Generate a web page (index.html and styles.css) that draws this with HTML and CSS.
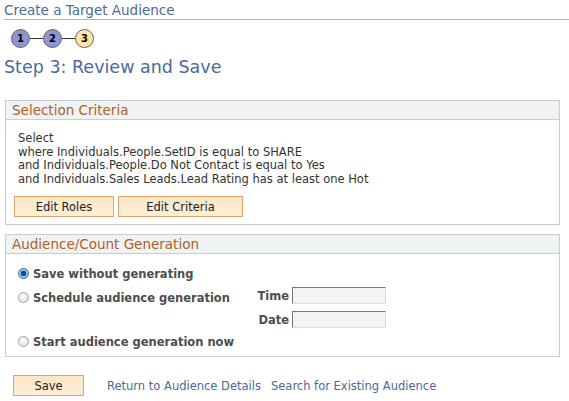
FILE: index.html
```html
<!DOCTYPE html>
<html>
<head>
<meta charset="utf-8">
<link rel="stylesheet" href="styles.css">
</head>
<body>
<div class="page">
  <div class="title">Create a Target Audience</div>
  <div class="steps">
    <span class="step done">1</span><span class="conn"></span><span class="step done">2</span><span class="conn"></span><span class="step cur">3</span>
  </div>
  <h1 class="steptitle">Step 3: Review and Save</h1>

  <div class="box sel">
    <div class="boxhead">Selection Criteria</div>
    <div class="boxbody">
      <div class="crit">Select<br>where Individuals.People.SetID is equal to SHARE<br>and Individuals.People.Do Not Contact is equal to Yes<br>and Individuals.Sales Leads.Lead Rating has at least one Hot</div>
      <div class="btnrow">
        <button class="btn b-roles">Edit Roles</button>
        <button class="btn b-crit">Edit Criteria</button>
      </div>
    </div>
  </div>

  <div class="box gen">
    <div class="boxhead">Audience/Count Generation</div>
    <div class="genbody">
      <div class="row r1"><span class="radio on"></span><span class="lbl">Save without generating</span></div>
      <div class="row r2">
        <span class="radio"></span><span class="lbl wide">Schedule audience generation</span>
        <div class="fields">
          <div class="field"><span class="flbl">Time</span><span class="input"></span></div>
          <div class="field"><span class="flbl">Date</span><span class="input"></span></div>
        </div>
      </div>
      <div class="row r3"><span class="radio"></span><span class="lbl">Start audience generation now</span></div>
    </div>
  </div>

  <div class="footer">
    <button class="btn b-save">Save</button>
    <a class="link">Return to Audience Details</a>
    <a class="link">Search for Existing Audience</a>
  </div>
</div>
</body>
</html>
```

FILE: styles.css
```css
html, body { margin: 0; padding: 0; background: #fff; }
body { font-family: "DejaVu Sans", Verdana, sans-serif; font-size: 11.5px; color: #333; }
.page { padding: 0 0 0 4px; width: 556px; }
.title { color: #4a6a9a; font-size: 13.5px; line-height: 16px; padding-top: 2px; padding-bottom: 1px; width: 565px; border-bottom: 1px solid #b5b5b5; }
.steps { display: flex; align-items: center; height: 19px; margin-top: 9px; padding-left: 7px; }
.step { width: 17px; height: 17px; border-radius: 50%; border: 1px solid #666; display: flex; align-items: center; justify-content: center; font-size: 10px; font-weight: bold; color: #000; }
.step.done { background: #8c96d3; }
.step.cur { background: #fde6a0; }
.conn { width: 13px; height: 1px; background: #333; }
.steptitle { margin: 9px 0 0 0; font-size: 17.5px; font-weight: normal; color: #4a6a9a; line-height: 20px; }
.box { border: 1px solid #c8cdd3; margin-left: 1px; }
.sel { margin-top: 23px; }
.gen { margin-top: 9px; }
.boxhead { background: #eff3f4; border-bottom: 1px solid #c8cdd3; color: #b35d1e; font-size: 13.5px; line-height: 18px; padding-left: 6px; }
.boxbody { padding: 12px 0 7px 12px; }
.crit { line-height: 13.5px; color: #333; }
.btnrow { display: flex; gap: 4px; margin-top: 10px; margin-left: -4px; }
.btn { font-family: "DejaVu Sans", Verdana, sans-serif; font-size: 11.5px; color: #222; background: linear-gradient(#fde7c3, #fcefd9); border: 1px solid #e0a46b; height: 21px; padding: 0; box-sizing: border-box; }
.b-roles { width: 100px; }
.b-crit { width: 125px; }
.genbody { padding: 13px 0 7px 12px; }
.row { display: flex; align-items: flex-start; font-weight: bold; color: #4d4d4d; font-size: 11.5px; }
.radio { width: 11px; height: 11px; border-radius: 50%; border: 1px solid #a3a3a3; background: radial-gradient(circle at 40% 40%, #fff, #d8d8d8); margin-right: 4px; flex: none; box-sizing: border-box; margin-top: 1px; }
.radio.on { border-color: #2d5f8a; background: radial-gradient(circle, #0b4ea0 0 2.5px, #7fb4e3 3px, #d4e7f7 5px); }
.lbl { line-height: 14px; }
.lbl.wide { width: 200px; flex: none; white-space: nowrap; }
.r1 { height: 24px; }
.r2 { height: 44px; }
.fields { margin-top: -4px; display: flex; flex-direction: column; gap: 7px; width: 153px; }
.field { display: flex; align-items: center; justify-content: flex-end; }
.flbl { margin-right: 3px; }
.input { width: 94px; height: 17px; box-sizing: border-box; background: #f3f3f3; border: 1px solid #ddd; border-top-color: #777; border-left-color: #777; }
.footer { display: flex; align-items: center; margin-top: 18px; margin-left: 9px; }
.b-save { width: 71px; margin-right: 23px; }
.link { color: #4a6a9a; font-size: 11.5px; margin-right: 10px; }
```
